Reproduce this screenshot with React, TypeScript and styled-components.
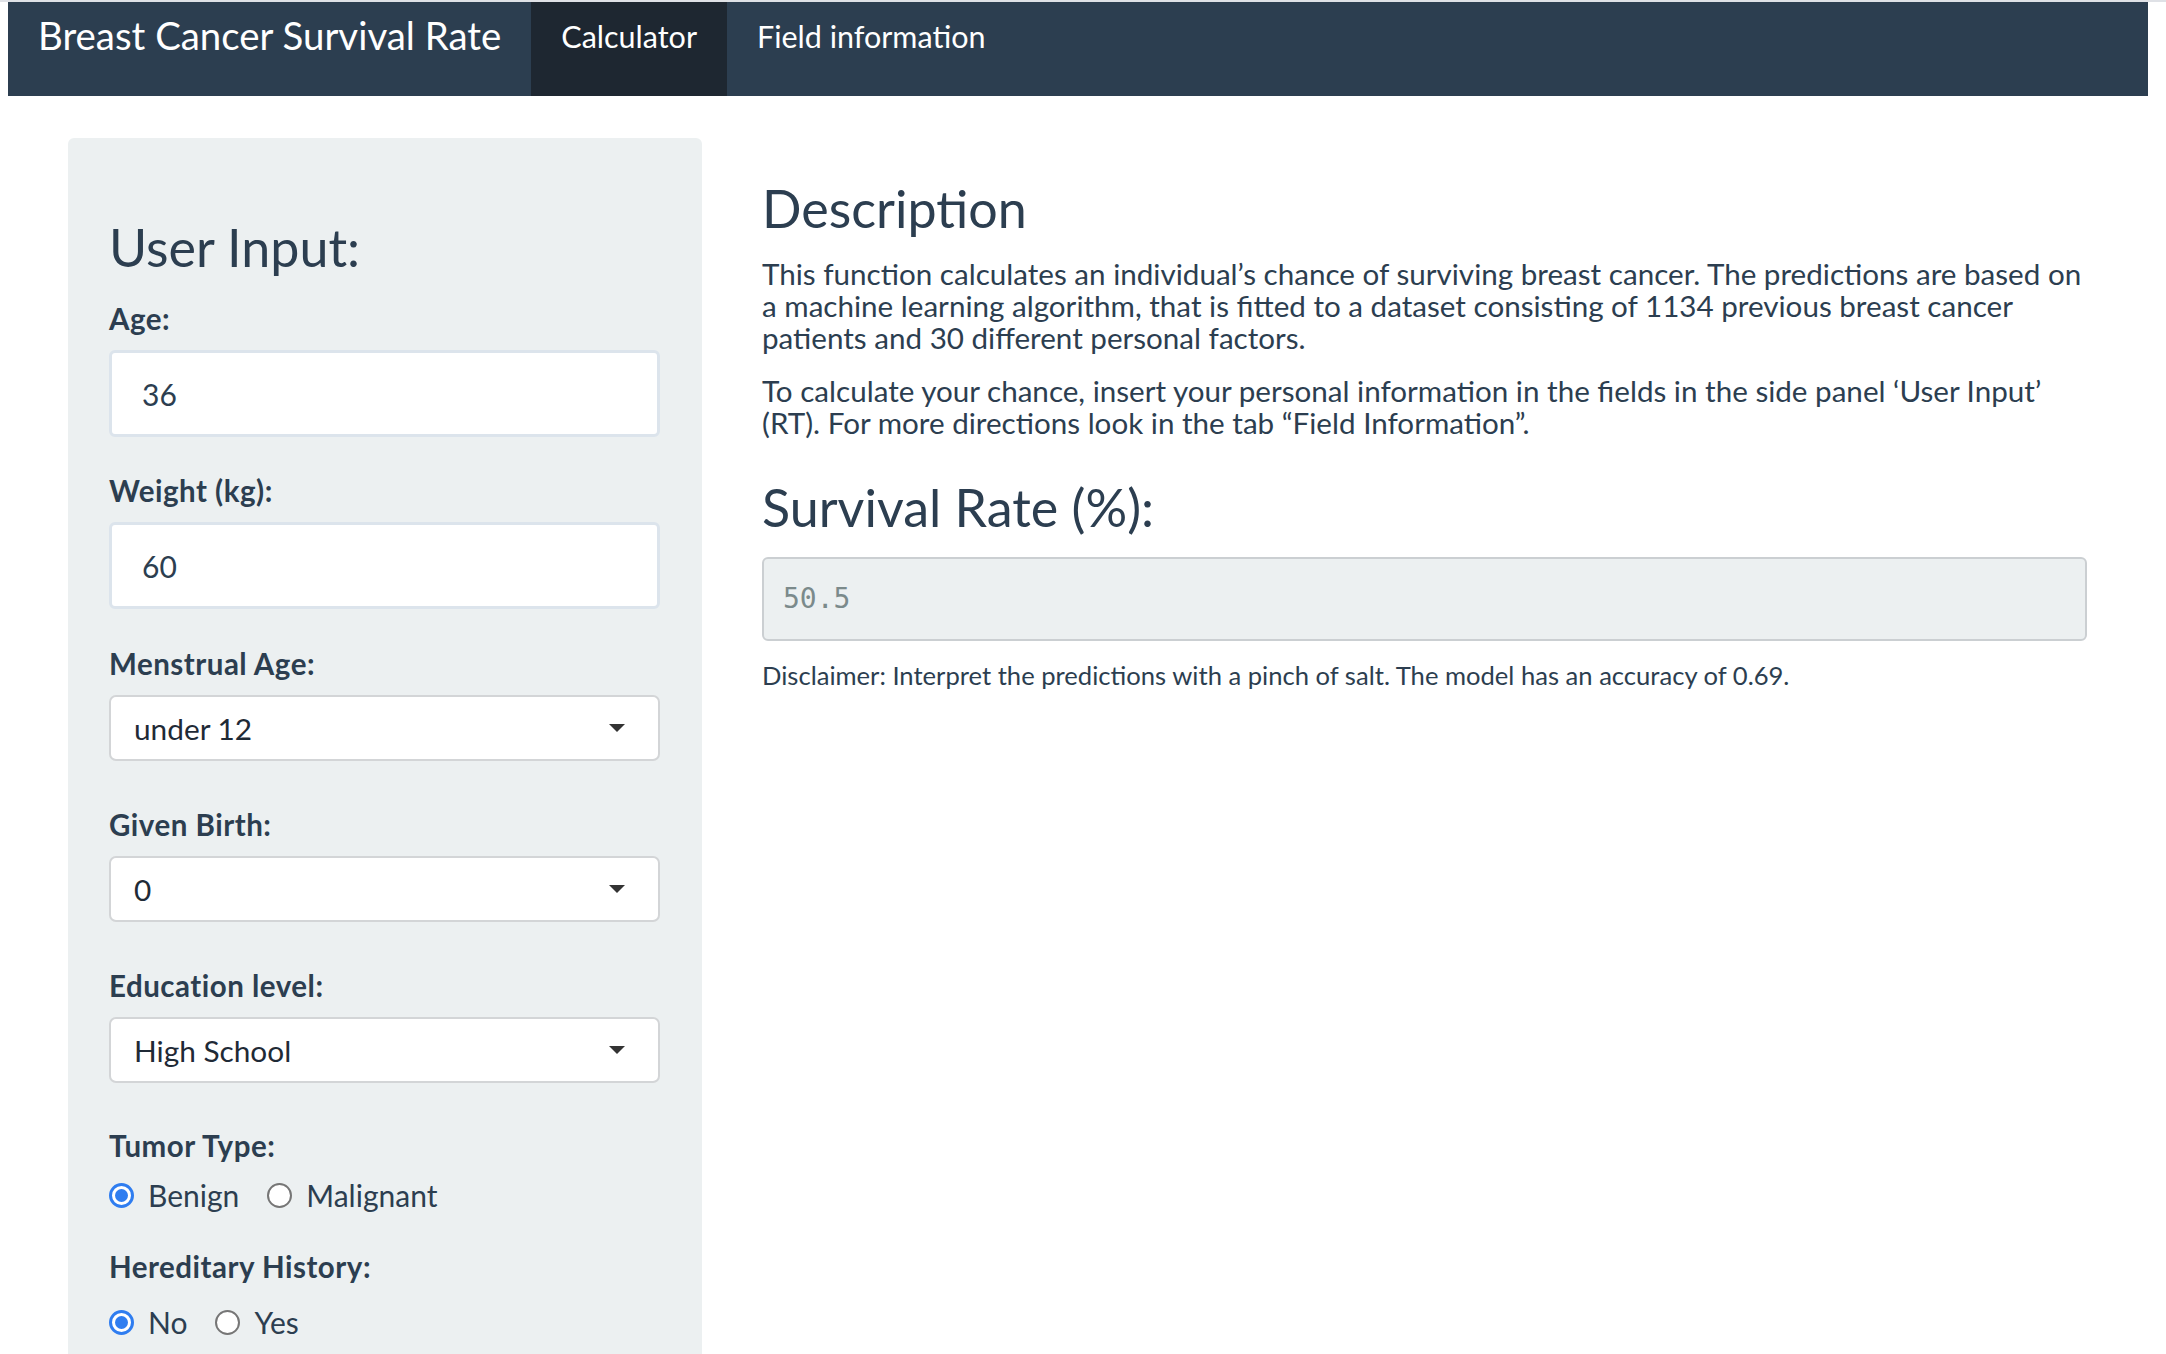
import React from "react";
import styled, { createGlobalStyle } from "styled-components";

const GlobalStyle = createGlobalStyle`
  html, body { margin: 0; padding: 0; background: #ffffff; }
  body {
    font-family: Lato, "Open Sans", "Liberation Sans", sans-serif;
    color: #2c3e50;
    -webkit-font-smoothing: antialiased;
  }
  * { box-sizing: border-box; }
`;

const Page = styled.div`
  width: 2166px;
  height: 1354px;
  overflow: hidden;
  border-top: 2px solid #dfe1e6;
`;

const Navbar = styled.nav`
  margin-left: 8px;
  width: 2140px;
  height: 94px;
  background: #2c3e50;
  display: flex;
  align-items: stretch;
`;

const Brand = styled.div`
  padding: 10px 30px 0 30px;
  font-size: 38.4px;
  line-height: 1.2;
  color: #ffffff;
  white-space: nowrap;
`;

const NavTab = styled.div<{ $active?: boolean }>`
  padding: 16px 30px 0 30px;
  font-size: 30.5px;
  line-height: 1.2;
  color: #ffffff;
  white-space: nowrap;
  background: ${(p) => (p.$active ? "#1e2731" : "transparent")};
`;

const Main = styled.main`
  display: flex;
  align-items: flex-start;
  gap: 60px;
  padding: 42px 0 0 68px;
`;

const SidePanel = styled.aside`
  width: 634px;
  flex: none;
  background: #ecf0f1;
  border-radius: 6px;
  padding: 78px 42px 60px 41px;
`;

const Heading = styled.h3`
  margin: 0;
  font-size: 52px;
  font-weight: 400;
  line-height: 1.2;
  color: #2c3e50;
`;

const FormGroup = styled.div<{ $after: number }>`
  margin-bottom: ${(p) => p.$after}px;
  &:first-of-type { margin-top: 25px; }
`;

const Label = styled.label`
  display: block;
  font-size: 29.5px;
  font-weight: 700;
  letter-spacing: 0.5px;
  line-height: 31px;
  margin-bottom: 16px;
`;

const TextInput = styled.div`
  height: 87px;
  background: #ffffff;
  border: 3px solid #dce4ec;
  border-radius: 6px;
  display: flex;
  align-items: center;
  padding-left: 30px;
  font-size: 30px;
  color: #2c3e50;
`;

const SelectBox = styled.div`
  height: 66px;
  background: #ffffff;
  border: 2px solid #d3d5d7;
  border-radius: 7px;
  display: flex;
  align-items: center;
  justify-content: space-between;
  padding: 0 33px 0 23px;
  font-size: 29.8px;
  color: #1f2a36;
`;

const Caret = styled.span`
  width: 0;
  height: 0;
  border-left: 8px solid transparent;
  border-right: 8px solid transparent;
  border-top: 8px solid #333333;
`;

const RadioRow = styled.div<{ $top: number }>`
  display: flex;
  align-items: center;
  height: 36px;
  padding-top: ${(p) => p.$top}px;
  box-sizing: content-box;
`;

const RadioOption = styled.span`
  display: inline-flex;
  align-items: center;
  gap: 14px;
  margin-right: 28px;
  font-size: 30px;
  line-height: 36px;
`;

const RadioDot = styled.span<{ $checked?: boolean }>`
  width: 25px;
  height: 25px;
  border-radius: 50%;
  background: #ffffff;
  border: ${(p) => (p.$checked ? "3px solid #2f7df0" : "2px solid #767676")};
  display: inline-flex;
  align-items: center;
  justify-content: center;
  &::after {
    content: "";
    display: ${(p) => (p.$checked ? "block" : "none")};
    width: 13px;
    height: 13px;
    border-radius: 50%;
    background: #2f7df0;
  }
`;

const ContentColumn = styled.section`
  width: 1325px;
  padding-top: 39px;
`;

const Paragraph = styled.p<{ $top: number }>`
  margin: ${(p) => p.$top}px 0 0 0;
  font-size: 29.6px;
  line-height: 32px;
`;

const SubHeading = styled(Heading)`
  margin-top: 37px;
`;

const OutputBox = styled.pre`
  margin: 18px 0 0 0;
  height: 84px;
  background: #ecf0f1;
  border: 2px solid #cbcfd2;
  border-radius: 6px;
  display: flex;
  align-items: center;
  padding-left: 19px;
  font-family: "DejaVu Sans Mono", "Liberation Mono", monospace;
  font-size: 28px;
  color: #7b8a8b;
`;

const Disclaimer = styled.p`
  margin: 20px 0 0 0;
  font-size: 25.6px;
  line-height: 28px;
`;

const Field: React.FC<{ label: string; after: number; children: React.ReactNode }> = ({ label, after, children }) => (
  <FormGroup $after={after}>
    <Label>{label}</Label>
    {children}
  </FormGroup>
);

const Select: React.FC<{ value: string }> = ({ value }) => (
  <SelectBox>
    <span>{value}</span>
    <Caret />
  </SelectBox>
);

const Radios: React.FC<{ options: string[]; checked: string; top: number }> = ({ options, checked, top }) => (
  <RadioRow $top={top}>
    {options.map((o) => (
      <RadioOption key={o}>
        <RadioDot $checked={o === checked} />
        {o}
      </RadioOption>
    ))}
  </RadioRow>
);

export default function App() {
  return (
    <>
      <GlobalStyle />
      <Page>
        <Navbar>
          <Brand>Breast Cancer Survival Rate</Brand>
          <NavTab $active>Calculator</NavTab>
          <NavTab>Field information</NavTab>
        </Navbar>
        <Main>
          <SidePanel>
            <Heading>User Input:</Heading>
            <Field label="Age:" after={38}>
              <TextInput>36</TextInput>
            </Field>
            <Field label="Weight (kg):" after={39}>
              <TextInput>60</TextInput>
            </Field>
            <Field label="Menstrual Age:" after={48}>
              <Select value="under 12" />
            </Field>
            <Field label="Given Birth:" after={48}>
              <Select value="0" />
            </Field>
            <Field label="Education level:" after={47}>
              <Select value="High School" />
            </Field>
            <Field label="Tumor Type:" after={38}>
              <Radios options={["Benign", "Malignant"]} checked="Benign" top={0} />
            </Field>
            <Field label="Hereditary History:" after={0}>
              <Radios options={["No", "Yes"]} checked="No" top={6} />
            </Field>
          </SidePanel>
          <ContentColumn>
            <Heading>Description</Heading>
            <Paragraph $top={19}>
              This function calculates an individual’s chance of surviving breast cancer. The predictions are based on a
              machine learning algorithm, that is fitted to a dataset consisting of 1134 previous breast cancer patients
              and 30 different personal factors.
            </Paragraph>
            <Paragraph $top={21}>
              To calculate your chance, insert your personal information in the fields in the side panel ‘User Input’
              (RT). For more directions look in the tab “Field Information”.
            </Paragraph>
            <SubHeading>Survival Rate (%):</SubHeading>
            <OutputBox>50.5</OutputBox>
            <Disclaimer>Disclaimer: Interpret the predictions with a pinch of salt. The model has an accuracy of 0.69.</Disclaimer>
          </ContentColumn>
        </Main>
      </Page>
    </>
  );
}
